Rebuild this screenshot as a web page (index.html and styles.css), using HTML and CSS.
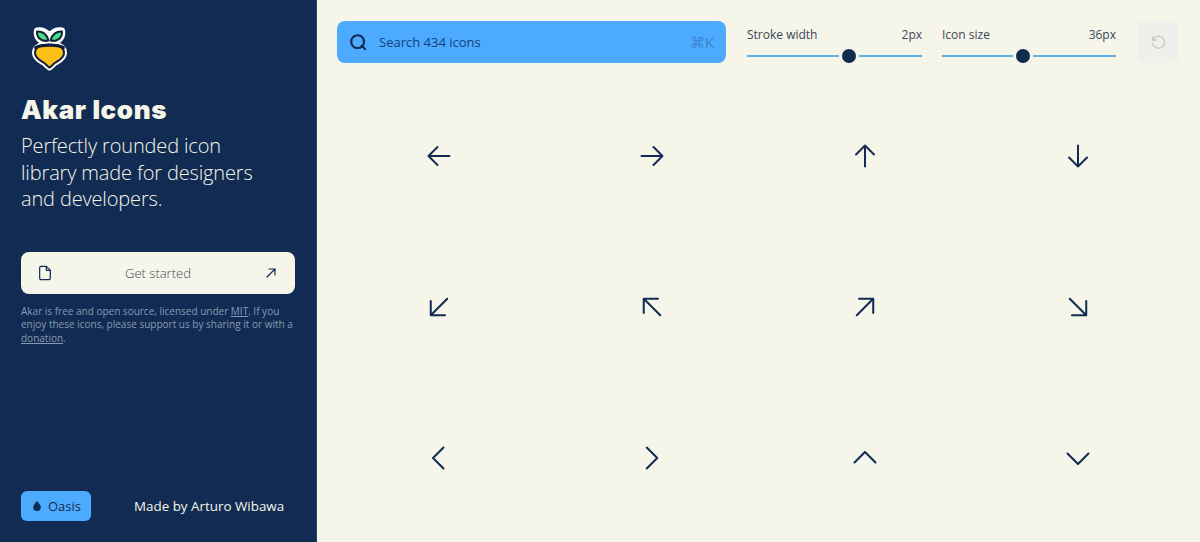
FILE: index.html
```html
<!DOCTYPE html>
<html lang="en">
<head>
    <meta charset="UTF-8">
    <meta name="viewport" content="width=device-width, initial-scale=1.0">
    <title>Akar Icons</title>
    <link rel="stylesheet" href="styles.css">
</head>
<body>
    <aside class="sidebar">
        <svg class="logo" viewBox="0 0 38 44" width="38" height="44">
            <g class="logo-edge">
                <path d="M6 3.500c5-1 10 1 12.500 6 2.500-5 7.500-7 12.500-6 1.500 7-4 12.500-12.500 12.500S4.500 10.500 6 3.500z"/>
                <path d="M4 26c0-6 6-8.500 14.500-8.500S33 20 33 26c0 5-5 7.500-8.500 9.500-2.500 1.500-4 4-6 5-2-1-3.500-3.500-6-5C9 33.500 4 31 4 26z"/>
            </g>
            <g class="logo-ink">
                <path class="leaf" d="M6 4.500c5-.5 10 2.500 11.500 9-6 1.500-12-2-11.500-9z"/>
                <path class="leaf" d="M31 4.500c-5-.5-10 2.500-11.500 9 6 1.500 12-2 11.500-9z"/>
                <path class="turnip" d="M4 26c0-6 6-8.500 14.500-8.500S33 20 33 26c0 5-5 7.500-8.500 9.500-2.500 1.500-4 4-6 5-2-1-3.500-3.500-6-5C9 33.500 4 31 4 26z"/>
                <path class="band" d="M4.500 20.500c6-3 22-3 28 0"/>
            </g>
        </svg>
        <h1>Akar Icons</h1>
        <p class="tagline">Perfectly rounded icon library made for designers and developers.</p>
        <a class="start-button" href="#">
            <svg viewBox="0 0 24 24" width="16" height="16" class="line-small"><path d="M4 4a2 2 0 0 1 2-2h8l6 6v12a2 2 0 0 1-2 2H6a2 2 0 0 1-2-2z"/><path d="M14 2v6h6"/></svg>
            <span>Get started</span>
            <svg viewBox="0 0 24 24" width="16" height="16" class="line-small"><path d="M6 18L18 6M18 6H9M18 6v9"/></svg>
        </a>
        <p class="note">Akar is free and open source, licensed under <a href="#">MIT</a>. If you enjoy these icons, please support us by sharing it or with a <a href="#">donation</a>.</p>
        <div class="sidebar-footer">
            <a class="oasis" href="#">
                <svg viewBox="0 0 12 12" width="12" height="12"><path d="M6 1c1.500 2 3.800 3.800 3.800 6.200A3.800 3.800 0 0 1 2.200 7.200C2.200 4.800 4.500 3 6 1z"/></svg>
                Oasis
            </a>
            <span class="credit">Made by Arturo Wibawa</span>
        </div>
    </aside>
    <main class="content">
        <div class="toolbar">
            <label class="search">
                <svg viewBox="0 0 24 24" width="18" height="18"><path d="M21.500 21.500l-4.500-4.500"/><circle cx="11.500" cy="11.500" r="8.500"/></svg>
                <span class="search-text">Search 434 icons</span>
                <span class="shortcut">⌘K</span>
            </label>
            <div class="slider slider-stroke">
                <div class="slider-label"><span>Stroke width</span><span>2px</span></div>
                <div class="slider-track">
                    <i class="track-line line-a"></i><i class="thumb"></i><i class="track-line line-b"></i>
                </div>
            </div>
            <div class="slider slider-size">
                <div class="slider-label"><span>Icon size</span><span>36px</span></div>
                <div class="slider-track">
                    <i class="track-line line-a"></i><i class="thumb"></i><i class="track-line line-b"></i>
                </div>
            </div>
            <button class="reset">
                <svg viewBox="0 0 24 24" width="16" height="16"><path d="M4 4v5h5"/><path d="M4.500 9A9 9 0 1 1 4 14"/></svg>
            </button>
        </div>
        <div class="icon-grid">
            <div class="cell"><svg viewBox="0 0 24 24"><path d="M5 12h14M5 12l6-6M5 12l6 6"/></svg></div>
            <div class="cell"><svg viewBox="0 0 24 24"><path d="M5 12h14M19 12l-6-6M19 12l-6 6"/></svg></div>
            <div class="cell"><svg viewBox="0 0 24 24"><path d="M12 19V5M12 5L6 11M12 5l6 6"/></svg></div>
            <div class="cell"><svg viewBox="0 0 24 24"><path d="M12 5v14M12 19l-6-6M12 19l6-6"/></svg></div>
            <div class="cell"><svg viewBox="0 0 24 24"><path d="M17.500 6.500l-11 11M6.500 17.500H16M6.500 17.500V8"/></svg></div>
            <div class="cell"><svg viewBox="0 0 24 24"><path d="M17.500 17.500l-11-11M6.500 6.500H16M6.500 6.500V16"/></svg></div>
            <div class="cell"><svg viewBox="0 0 24 24"><path d="M6.500 17.500l11-11M17.500 6.500H8M17.500 6.500V16"/></svg></div>
            <div class="cell"><svg viewBox="0 0 24 24"><path d="M6.500 6.500l11 11M17.500 17.500H8M17.500 17.500V8"/></svg></div>
            <div class="cell"><svg viewBox="0 0 24 24"><path d="M15 5l-7 7 7 7"/></svg></div>
            <div class="cell"><svg viewBox="0 0 24 24"><path d="M8.500 5l7 7-7 7"/></svg></div>
            <div class="cell"><svg viewBox="0 0 24 24"><path d="M5 15l7-7 7 7"/></svg></div>
            <div class="cell"><svg viewBox="0 0 24 24"><path d="M5 9l7 7 7-7"/></svg></div>
        </div>
    </main>
</body>
</html>
```
FILE: styles.css
```css
* {
    box-sizing: border-box;
}

html, body {
    height: 100%;
}

body {
    margin: 0;
    display: flex;
    overflow: hidden;
    font-family: "Open Sans", "Noto Sans", sans-serif;
    background-color: #f5f5ea;
    color: #112b52;
}

/* Sidebar */
.sidebar {
    width: 316px;
    flex-shrink: 0;
    display: flex;
    flex-direction: column;
    padding: 27px 21px 21px;
    background-color: #112b52;
    color: #f5f5ea;
}

.logo {
    display: block;
    margin-left: 10px;
}

.logo-edge path {
    fill: #fff;
    stroke: #fff;
    stroke-width: 6;
    stroke-linejoin: round;
}

.logo-ink path {
    stroke: #14213d;
    stroke-width: 2;
    stroke-linejoin: round;
    stroke-linecap: round;
}

.leaf {
    fill: #4ade80;
}

.turnip {
    fill: #fbbf16;
}

.logo-ink .band {
    fill: none;
    stroke-width: 3;
}

h1 {
    margin: 20px 0 0;
    font-family: "Inter", sans-serif;
    font-size: 26px;
    line-height: 38px;
    font-weight: 900;
    letter-spacing: 0.6px;
    color: #f5f5ea;
}

.tagline {
    margin: 4px 0 0;
    width: 240px;
    font-size: 20px;
    line-height: 26.5px;
    font-weight: 300;
    letter-spacing: -0.15px;
}

.start-button {
    display: flex;
    align-items: center;
    justify-content: space-between;
    height: 42px;
    width: 274px;
    margin-top: 39px;
    padding: 0 16px;
    border-radius: 8px;
    background-color: #f5f5ea;
    color: #3f4a5c;
    font-size: 13px;
    font-weight: 300;
    text-decoration: none;
}

.line-small {
    fill: none;
    stroke: #112b52;
    stroke-width: 1.8;
    stroke-linecap: round;
    stroke-linejoin: round;
}

.note {
    margin: 11px 0 0;
    width: 274px;
    font-size: 10px;
    line-height: 13.5px;
    color: #8a9ab2;
}

.note a {
    color: inherit;
}

.sidebar-footer {
    margin-top: auto;
    display: flex;
    align-items: center;
}

.oasis {
    display: flex;
    align-items: center;
    justify-content: center;
    gap: 5px;
    width: 70px;
    height: 30px;
    border-radius: 6px;
    background-color: #4dabff;
    color: #112b52;
    font-size: 13px;
    text-decoration: none;
}

.oasis svg {
    fill: #112b52;
}

.credit {
    margin-left: 43px;
    font-size: 13.4px;
    color: #f5f5ea;
}

/* Main */
.content {
    flex: 1;
    padding: 21px 21px 0 20px;
    border-left: 1px solid #2a4468;
}

.toolbar {
    display: flex;
    align-items: stretch;
    height: 42px;
}

.search {
    display: flex;
    align-items: center;
    width: 389px;
    padding: 0 12px;
    border-radius: 8px;
    background-color: #4dabff;
    color: #14407a;
    font-size: 13px;
}

.search svg {
    fill: none;
    stroke: #112b52;
    stroke-width: 2.800;
    stroke-linecap: round;
}

.search-text {
    margin-left: 12px;
}

.shortcut {
    margin-left: auto;
    color: #3a86d0;
    font-size: 15px;
}

.slider {
    display: flex;
    flex-direction: column;
    justify-content: space-between;
    color: #3a4656;
    font-size: 12px;
}

.slider-stroke {
    width: 175px;
    margin-left: 21px;
}

.slider-size {
    width: 174px;
    margin-left: 20px;
}

.slider-label {
    display: flex;
    justify-content: space-between;
    line-height: 16px;
    margin-top: 6px;
}

.slider-track {
    display: flex;
    align-items: center;
    gap: 3px;
    height: 14px;
}

.track-line {
    height: 2px;
    background-color: #62aee6;
}

.line-b {
    flex: 1;
}

.slider-stroke .line-a {
    width: 92px;
}

.slider-size .line-a {
    width: 71px;
}

.thumb {
    width: 14px;
    height: 14px;
    border-radius: 50%;
    background-color: #112b52;
}

.reset {
    width: 42px;
    margin-left: 21px;
    padding: 0;
    display: flex;
    align-items: center;
    justify-content: center;
    border: none;
    border-radius: 8px;
    background-color: #efefec;
}

.reset svg {
    fill: none;
    stroke: #c9c9c6;
    stroke-width: 2;
    stroke-linecap: round;
    stroke-linejoin: round;
}

/* Icon grid */
.icon-grid {
    display: grid;
    grid-template-columns: repeat(4, 213px);
    grid-auto-rows: 151px;
    margin: 17px 0 0 -5px;
}

.cell {
    display: flex;
    align-items: center;
    justify-content: center;
}

.cell svg {
    width: 36px;
    height: 36px;
    fill: none;
    stroke: #112b52;
    stroke-width: 1.34;
    stroke-linecap: round;
    stroke-linejoin: round;
}
```
